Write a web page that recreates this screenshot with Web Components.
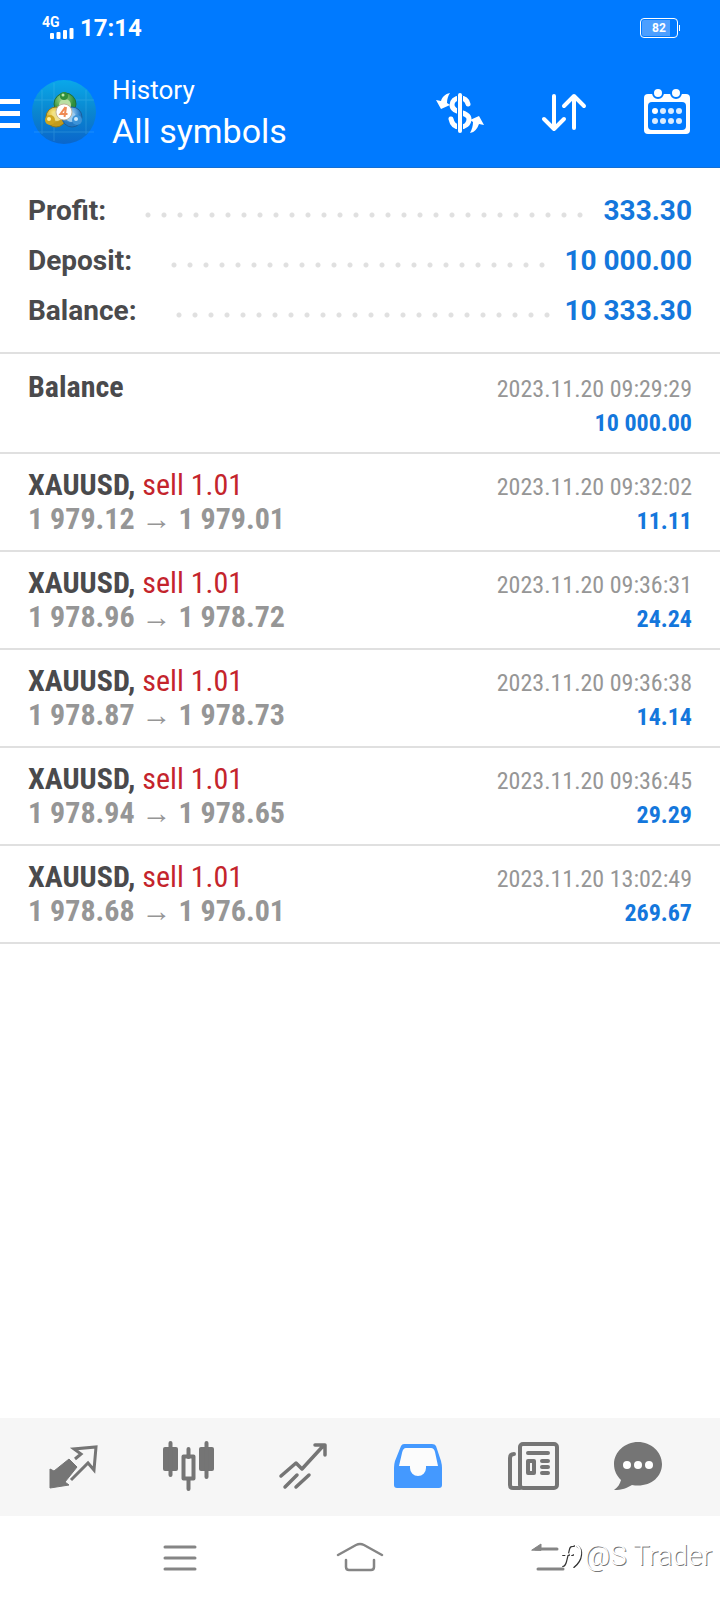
<!DOCTYPE html>
<html lang="en">
<head>
<meta charset="utf-8">
<meta name="viewport" content="width=device-width, initial-scale=1">
<title>History</title>
<style>
  body { margin: 0; background: #fff; font-family: Roboto, "Noto Sans", sans-serif; }
</style>
</head>
<body>
<history-app>
  <status-bar slot="top" network="4G" time="17:14" battery="82"></status-bar>
  <app-header slot="top" caption="History" heading="All symbols"></app-header>

  <summary-line slot="summary" label="Profit:">333.30</summary-line>
  <summary-line slot="summary" label="Deposit:">10 000.00</summary-line>
  <summary-line slot="summary" label="Balance:">10 333.30</summary-line>

  <deal-row class="first" name="Balance" date="2023.11.20 09:29:29" amount="10 000.00"></deal-row>
  <deal-row name="XAUUSD," side="sell 1.01" open="1 979.12" close="1 979.01" date="2023.11.20 09:32:02" amount="11.11"></deal-row>
  <deal-row name="XAUUSD," side="sell 1.01" open="1 978.96" close="1 978.72" date="2023.11.20 09:36:31" amount="24.24"></deal-row>
  <deal-row name="XAUUSD," side="sell 1.01" open="1 978.87" close="1 978.73" date="2023.11.20 09:36:38" amount="14.14"></deal-row>
  <deal-row name="XAUUSD," side="sell 1.01" open="1 978.94" close="1 978.65" date="2023.11.20 09:36:45" amount="29.29"></deal-row>
  <deal-row name="XAUUSD," side="sell 1.01" open="1 978.68" close="1 976.01" date="2023.11.20 13:02:49" amount="269.67"></deal-row>

  <tab-bar slot="bottom"></tab-bar>
  <system-nav slot="bottom"><image-credit>@S Trader</image-credit></system-nav>
</history-app>

<script>
  const define = (name, html, fill) => {
    const template = document.createElement('template');
    template.innerHTML = html;
    customElements.define(name, class extends HTMLElement {
      constructor() {
        super();
        this.attachShadow({ mode: 'open' }).append(template.content.cloneNode(true));
      }
      connectedCallback() {
        if (fill) fill(this, (sel) => this.shadowRoot.querySelector(sel));
      }
    });
  };

  define('history-app', `
    <style>
      :host { display: flex; flex-direction: column; min-height: 100vh; }
      main { flex: 1; }
      .summary { padding: 18px 28px 16px; }
    </style>
    <slot name="top"></slot>
    <main>
      <section class="summary" aria-label="Summary"><slot name="summary"></slot></section>
      <section role="list" aria-label="Deals"><slot></slot></section>
    </main>
    <slot name="bottom"></slot>
  `);

  define('status-bar', `
    <style>
      :host { display: flex; align-items: center; justify-content: space-between; height: 56px; padding: 0 40px 0 42px; background: #007aff; color: #fff; }
      .left { display: flex; align-items: center; gap: 6px; }
      .signal { display: grid; width: 32px; }
      .net { font-size: 14px; line-height: 11px; font-weight: 700; }
      .bars { justify-self: end; display: block; }
      .time { font-size: 24px; line-height: 28px; font-weight: 700; }
      .battery { display: flex; align-items: center; gap: 1px; }
      .cell { box-sizing: border-box; width: 38px; height: 20px; padding: 1px; border: 1px solid #fff; border-radius: 4px; }
      .level { width: 28px; height: 16px; border-radius: 2px 0 0 2px; background: #4c9fff; font-size: 12px; line-height: 16px; font-weight: 700; text-indent: 10px; }
      .tip { width: 1px; height: 6px; background: #fff; }
    </style>
    <div class="left">
      <div class="signal">
        <span class="net"></span>
        <svg class="bars" width="24" height="11" viewBox="0 0 24 11" fill="#fff" aria-hidden="true">
          <rect x="0" y="5" width="4" height="6" rx="1"/><rect x="6.5" y="4" width="4" height="7" rx="1"/>
          <rect x="13" y="2" width="4" height="9" rx="1"/><rect x="19.5" y="0" width="4" height="11" rx="1"/>
        </svg>
      </div>
      <span class="time"></span>
    </div>
    <div class="battery"><div class="cell"><div class="level"></div></div><div class="tip"></div></div>
  `, (el, $) => {
    $('.net').textContent = el.getAttribute('network');
    $('.time').textContent = el.getAttribute('time');
    $('.level').textContent = el.getAttribute('battery');
  });

  define('app-logo', `
    <style>:host { display: block; } svg { display: block; }</style>
    <svg width="64" height="64" viewBox="0 0 64 64" role="img" aria-label="MetaTrader 4">
      <defs>
        <linearGradient id="bg" x1="0" y1="0" x2="0" y2="1"><stop offset="0" stop-color="#0aa8ea"/><stop offset=".5" stop-color="#0a86cf"/><stop offset="1" stop-color="#0a66cc"/></linearGradient>
        <radialGradient id="g" cx=".4" cy=".3"><stop offset="0" stop-color="#a9dc90"/><stop offset="1" stop-color="#2f8f3c"/></radialGradient>
        <radialGradient id="y" cx=".4" cy=".3"><stop offset="0" stop-color="#fff08a"/><stop offset="1" stop-color="#c29a1c"/></radialGradient>
        <radialGradient id="b" cx=".4" cy=".3"><stop offset="0" stop-color="#b5e0ff"/><stop offset="1" stop-color="#2379c4"/></radialGradient>
      </defs>
      <circle cx="32" cy="32" r="32" fill="url(#bg)"/>
      <path d="M22 3v58M54 10v44M2 20h60M2 52h60M10 10v44" stroke="#6cc8f0" stroke-width="1" opacity=".25"/>
      <circle cx="33" cy="24" r="11" fill="url(#g)" stroke="#1f6f3a"/>
      <circle cx="33" cy="25" r="6" fill="#b9dfa4"/>
      <circle cx="24" cy="37" r="10" fill="url(#y)" stroke="#8f7a1c"/>
      <circle cx="25" cy="36" r="5" fill="#efe08a"/>
      <circle cx="40" cy="37" r="10" fill="url(#b)" stroke="#1c5f9c"/>
      <circle cx="39" cy="37" r="5" fill="#9ccbee"/>
      <circle cx="32" cy="16" r="4" fill="#2f8f3c"/><circle cx="31" cy="15" r="1.5" fill="#bfe8a8"/>
      <circle cx="18" cy="40" r="5" fill="#cfa51e"/><circle cx="17" cy="39" r="2" fill="#fff3a0"/>
      <circle cx="45" cy="40" r="5" fill="#3c93d8"/><circle cx="44" cy="39" r="2" fill="#cdeaff"/>
      <circle cx="32" cy="32" r="8" fill="#fff" stroke="#b5a58a" stroke-width=".8"/>
      <path d="M33.5 27l-5 7h7M34 27l-1.5 10" fill="none" stroke="#ef8a55" stroke-width="2"/>
    </svg>
  `);

  define('app-header', `
    <style>
      :host { display: flex; align-items: center; box-sizing: border-box; height: 112px; padding-right: 28px; background: #007aff; border-bottom: 1px solid #146fd4; color: #fff; }
      button { display: block; padding: 0; border: 0; background: none; color: inherit; }
      svg { display: block; }
      .menu { margin: 4px 12px 0 0; }
      .titles { flex: 1; margin-left: 16px; padding-bottom: 2px; }
      p, h1 { margin: 0; font-weight: 400; }
      p { font-size: 26px; line-height: 40px; }
      h1 { font-size: 34px; line-height: 42px; }
      .actions { display: flex; gap: 56px; }
    </style>
    <button class="menu" aria-label="Menu">
      <svg width="20" height="32" viewBox="0 0 20 32" fill="#fff"><path d="M0 1h20v5H0zM0 13h20v5H0zM0 25h20v5H0z"/></svg>
    </button>
    <app-logo></app-logo>
    <div class="titles"><p></p><h1></h1></div>
    <div class="actions">
      <button aria-label="Currency">
        <svg width="48" height="48" viewBox="0 0 48 48" fill="none" stroke="#fff" stroke-linecap="round">
          <path d="M32 16c-1-4-4-6-8-6-5 0-8 3-8 7 0 9 17 6 17 14 0 5-4 8-9 8-5 0-8-3-9-8" stroke-width="5"/>
          <path d="M24 8v35" stroke="#007aff" stroke-width="6" stroke-linecap="butt"/>
          <path d="M24 7v36" stroke-width="4"/>
          <path d="M14 5C9 6 6 9 5 13l-5-1 5 9 9-4-3-2c0-4 1-7 3-10zM34 45c5-1 7-4 9-9l5 1-5-9-9 4 3 2c0 4-1 7-3 11z" fill="#fff" stroke="none"/>
        </svg>
      </button>
      <button aria-label="Sort">
        <svg width="48" height="48" viewBox="0 0 48 48" fill="none" stroke="#fff" stroke-width="4" stroke-linecap="round" stroke-linejoin="round">
          <path d="M14 8v33M4 31l10 10 10-10M34 40V8M24 18L34 8l10 10"/>
        </svg>
      </button>
      <button aria-label="Period">
        <svg width="48" height="48" viewBox="2 2 48 48">
          <rect x="2" y="8" width="46" height="40" rx="4" fill="#fff"/>
          <rect x="6" y="16" width="38" height="28" rx="4" fill="#007aff"/>
          <g fill="#fff" stroke="#007aff" stroke-width="2"><circle cx="16" cy="7" r="5"/><circle cx="34" cy="7" r="5"/></g>
          <g fill="#d9ecff"><circle cx="13" cy="25" r="3" fill="#fff"/><circle cx="21" cy="25" r="3"/><circle cx="29" cy="25" r="3"/><circle cx="37" cy="25" r="3"/><circle cx="13" cy="35" r="3"/><circle cx="21" cy="35" r="3"/><circle cx="29" cy="35" r="3"/><circle cx="37" cy="35" r="3"/></g>
        </svg>
      </button>
    </div>
  `, (el, $) => {
    $('p').textContent = el.getAttribute('caption');
    $('h1').textContent = el.getAttribute('heading');
  });

  define('summary-line', `
    <style>
      :host { display: flex; align-items: center; height: 50px; font-size: 28px; line-height: 50px; font-weight: 700; }
      .label { color: #4a4a4c; }
      .dots { flex: 1; height: 6px; margin: 8px 14px 0 39px; background: radial-gradient(circle at 3px 3px, #e0e0e0 2px, transparent 3px) 0 0 / 16px 6px repeat-x; }
      .value { color: #1477dc; }
    </style>
    <span class="label"></span><span class="dots"></span><span class="value"><slot></slot></span>
  `, (el, $) => { $('.label').textContent = el.getAttribute('label'); });

  define('deal-row', `
    <style>
      :host { display: grid; grid-template: 34px 34px / 1fr auto; align-items: baseline; padding: 14px 28px; border-bottom: 2px solid #e0e0e0; font-family: "Roboto Condensed", Roboto, sans-serif; line-height: 34px; }
      :host(.first) { padding-top: 16px; border-top: 2px solid #e0e0e0; }
      .title, .prices { font-size: 30px; white-space: pre; }
      .name { color: #4a4a4c; font-weight: 700; }
      .side { color: #c4242c; }
      .prices { color: #969696; font-weight: 700; }
      .date, .amount { font-size: 24px; text-align: right; }
      .date { color: #969696; }
      .amount { color: #1477dc; font-weight: 700; }
    </style>
    <div class="title"><span class="name"></span> <span class="side"></span></div>
    <div class="date"></div>
    <div class="prices">&nbsp;</div>
    <div class="amount"></div>
  `, (el, $) => {
    el.setAttribute('role', 'listitem');
    $('.name').textContent = el.getAttribute('name');
    $('.side').textContent = el.getAttribute('side') || '';
    $('.date').textContent = el.getAttribute('date');
    $('.amount').textContent = el.getAttribute('amount');
    if (el.hasAttribute('open')) $('.prices').textContent = el.getAttribute('open') + ' \u2192 ' + el.getAttribute('close');
  });

  define('tab-bar', `
    <style>
      :host { display: block; background: #f6f6f6; color: #757575; }
      nav { display: grid; grid-template-columns: repeat(5, 115fr) 94fr; align-items: center; box-sizing: border-box; height: 98px; padding: 0 35px 2px 15px; }
      button { display: grid; justify-content: center; padding: 0; border: 0; background: none; color: inherit; }
      button[aria-current] { color: #4499ff; }
      svg { display: block; }
    </style>
    <nav aria-label="Sections">
      <button aria-label="Quotes">
        <svg width="50" height="50" viewBox="0 0 50 50">
          <path d="M2 28l4 2L21 18l8 8-12 15 4 3-19 3z" fill="currentColor" stroke="currentColor" stroke-linejoin="round"/>
          <path d="M27 18l6-5-7-5 22-2-2 23-6-7-17 17" fill="none" stroke="currentColor" stroke-width="3"/>
        </svg>
      </button>
      <button aria-label="Charts">
        <svg width="52" height="50" viewBox="0 0 52 50">
          <g fill="currentColor"><rect x="1" y="6" width="15" height="24" rx="2"/><rect x="37" y="6" width="15" height="24" rx="2"/></g>
          <path d="M8.5 2v32M44.500 2v34M26.5 8v8M26.5 38v10" stroke="currentColor" stroke-width="4" stroke-linecap="round"/>
          <rect x="21.5" y="15.5" width="10" height="22" fill="none" stroke="currentColor" stroke-width="4" stroke-linejoin="round"/>
        </svg>
      </button>
      <button aria-label="Trade">
        <svg width="50" height="50" viewBox="1 0 50 50" fill="none" stroke="currentColor" stroke-width="3.5" stroke-linecap="round" stroke-linejoin="round">
          <path d="M4 35l15-13 6 6L47 4M38 4h10v10M8 46l12-12M19 46l13-12"/>
        </svg>
      </button>
      <button aria-label="History" aria-current="page">
        <svg width="50" height="50" viewBox="0 0 50 50">
          <path d="M11 3h28q3 0 4 2l5 15q1 4 1 7v17q0 3-3 3H4q-3 0-3-3V27q0-4 1-7l6-15q1-2 3-2z" fill="currentColor"/>
          <path d="M13 7h25q3 0 4 4l3 14H33v2a8 8 0 0 1-16 0v-2H6l3-13q1-5 4-5z" fill="#fcfcfc"/>
        </svg>
      </button>
      <button aria-label="News">
        <svg width="52" height="50" viewBox="0 0 52 50" fill="none" stroke="currentColor" stroke-width="4" stroke-linecap="round" stroke-linejoin="round">
          <rect x="13" y="3" width="37" height="44" rx="3"/><path d="M13 47H6q-3 0-3-3V17q0-4 4-4"/>
          <path d="M21 12h20M35 20h6M35 26h6M35 32h6"/><rect x="21" y="20" width="6" height="12"/>
        </svg>
      </button>
      <button aria-label="Mailbox">
        <svg width="50" height="50" viewBox="0 0 50 50">
          <path d="M25 1C12 1 1 11 1 23c0 7 3 12 7 16-1 4-3 7-7 10 8 0 13-2 18-5 17 3 30-7 30-21C49 11 38 1 25 1z" fill="currentColor"/>
          <g fill="#fff"><circle cx="14" cy="24" r="4"/><circle cx="25" cy="24" r="4"/><circle cx="36" cy="24" r="4"/></g>
        </svg>
      </button>
    </nav>
  `);

  define('system-nav', `
    <style>
      :host { display: block; position: relative; background: #fff; color: #858585; }
      nav { display: flex; justify-content: space-between; align-items: center; height: 84px; padding: 0 144px; }
      button { padding: 0; border: 0; background: none; color: inherit; }
      svg { display: block; fill: none; stroke: currentColor; stroke-width: 3; stroke-linecap: round; }
    </style>
    <nav aria-label="System">
      <button aria-label="Recent apps"><svg width="72" height="32" viewBox="0 0 72 32"><path d="M21 5h30M21 16h30M21 27h30"/></svg></button>
      <button aria-label="Home"><svg width="72" height="32" viewBox="0 0 72 32"><path d="M14 13L32 3q4-2 8 0l18 10M22 18v7q0 3 3 3h22q3 0 3-3v-7" stroke-width="2.5"/></svg></button>
      <button aria-label="Back"><svg width="72" height="32" viewBox="0 0 72 32"><path d="M32 7h21M34 27h25" /><path d="M28 8l9-6v6z" fill="currentColor" stroke-width="1"/></svg></button>
    </nav>
    <slot></slot>
  `);

  define('image-credit', `
    <style>
      :host { position: absolute; right: 8px; bottom: 28px; display: flex; align-items: center; font-size: 28px; line-height: 32px; font-weight: 300; color: #fff; text-shadow: 1px 1px 0 #777; }
      svg { display: block; filter: drop-shadow(1px 1px 0 #333); }
    </style>
    <svg width="24" height="28" viewBox="0 0 24 28" fill="none" stroke="#fff" stroke-width="2" stroke-linecap="round" aria-hidden="true">
      <path d="M13 3c-5-1-5 4-6 8l-2 8q-1 4-3 4M2 12h6M16 3c6 3 6 14-3 21M11 12h1"/>
    </svg>
    <span><slot></slot></span>
  `);
</script>
</body>
</html>
